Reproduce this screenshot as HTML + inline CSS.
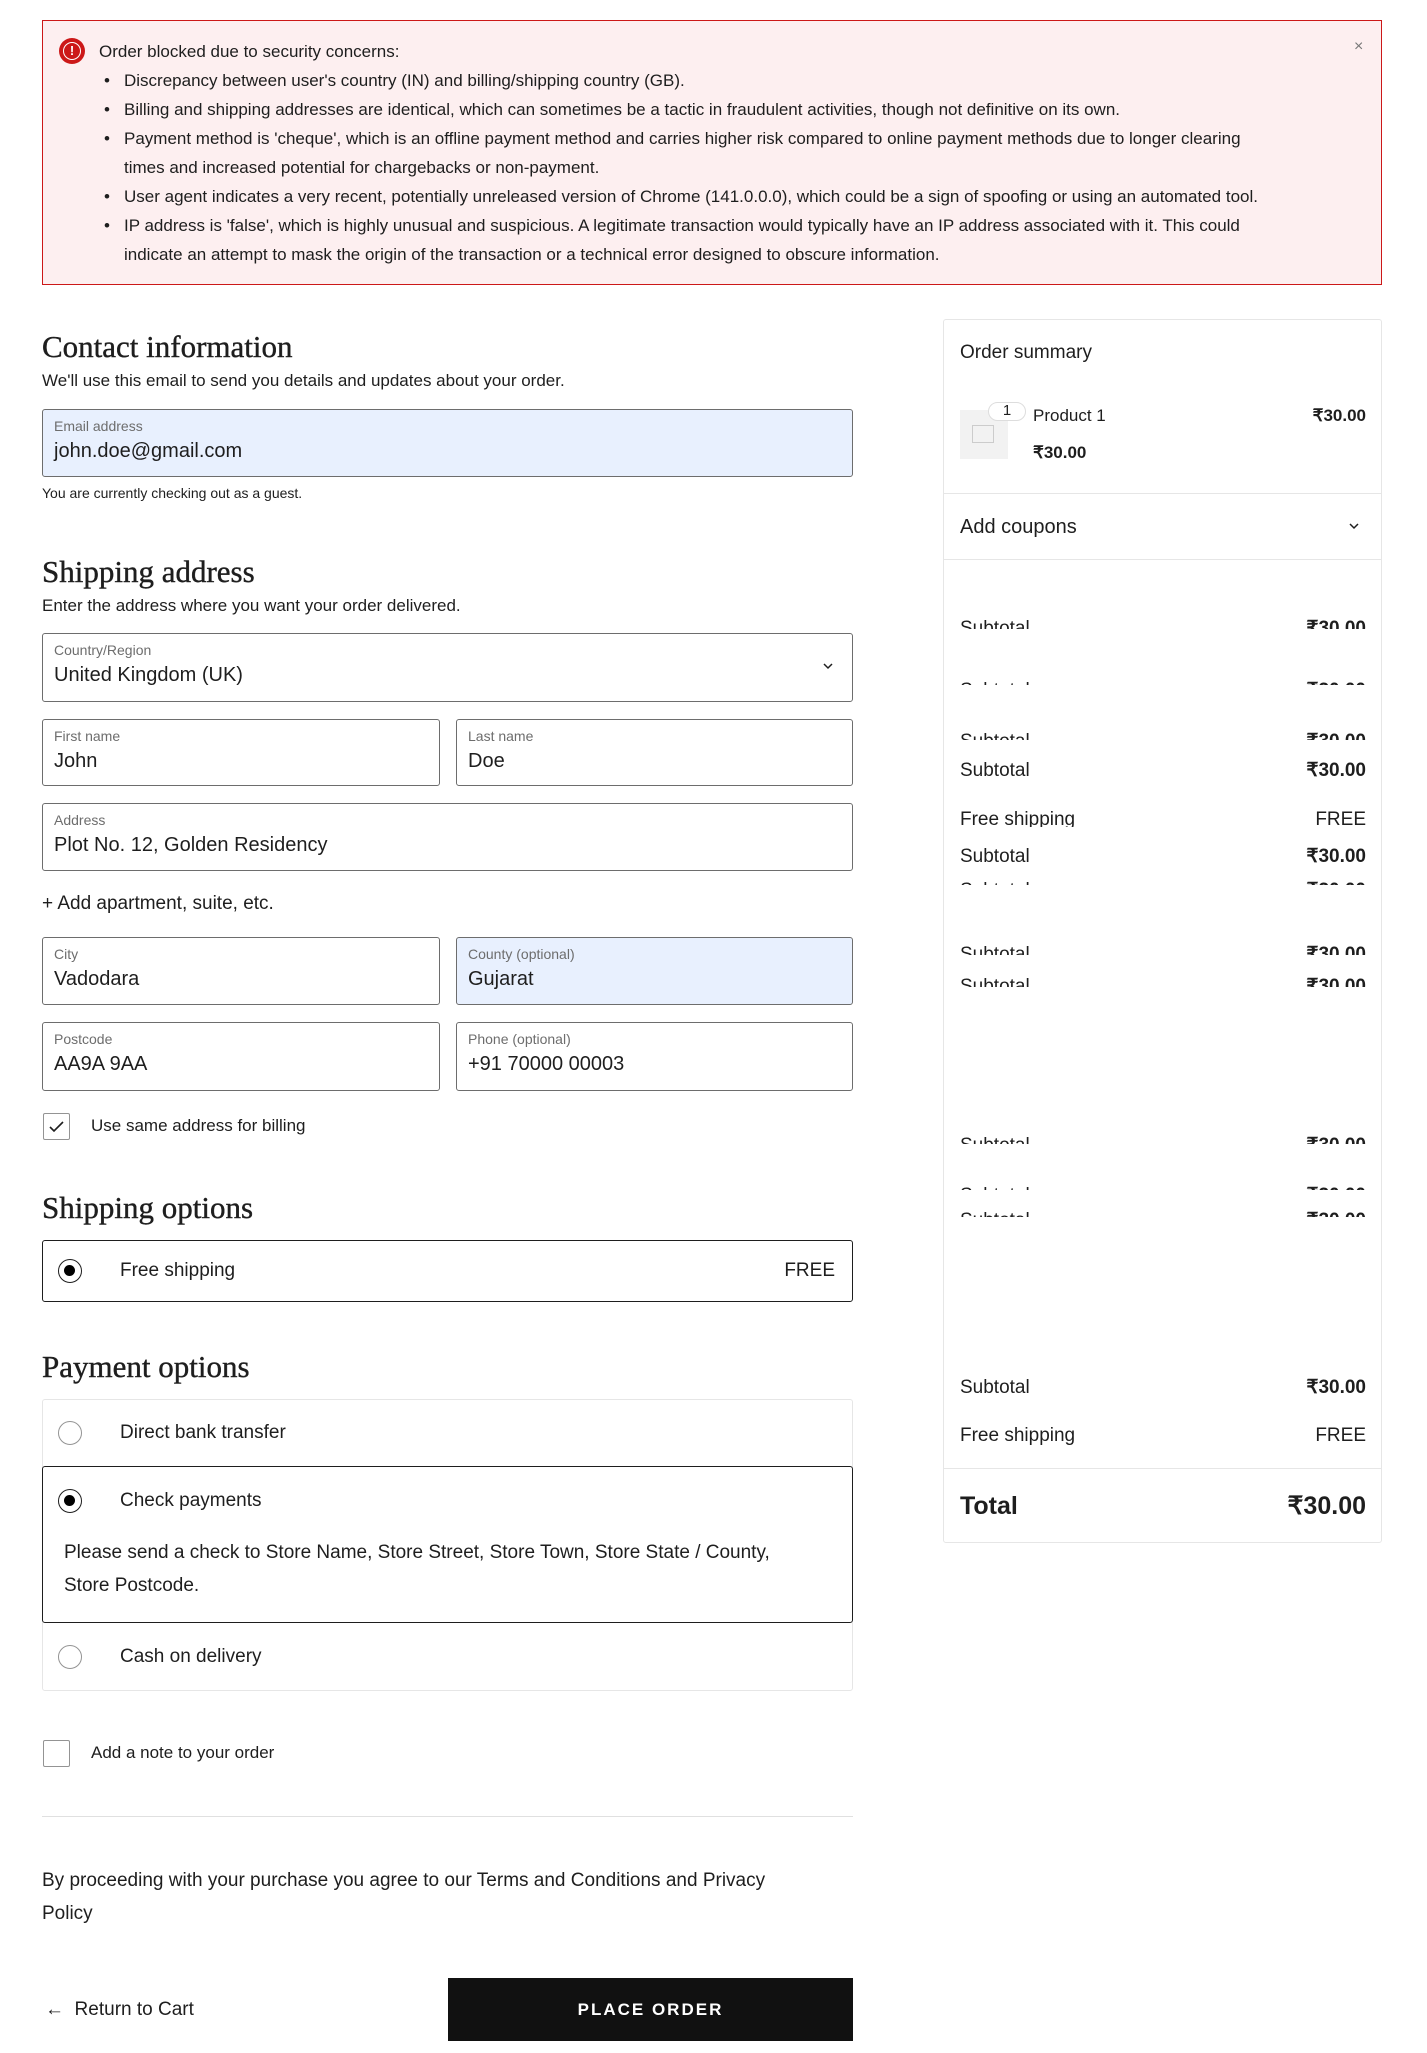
<!DOCTYPE html>
<html><head><meta charset="utf-8"><style>
*{box-sizing:border-box;margin:0;padding:0}
body{width:1427px;height:2053px;position:relative;background:#fff;font-family:"Liberation Sans",sans-serif;color:#1e1e1e;overflow:hidden}
.a{position:absolute;white-space:nowrap}
.al{position:absolute;left:42px;top:20px;width:1340px;height:265px;background:#fdeff0;border:1px solid #cc1818}
.at{font-size:17px;line-height:29px}
.h{font-family:"Liberation Serif",serif;font-size:31px;line-height:36px;color:#1e1e1e;font-weight:normal;-webkit-text-stroke:0.4px #1e1e1e}
.p{font-size:17px;line-height:24px}
.f{position:absolute;border:1px solid #6d6d6d;border-radius:3px;background:#fff}
.f .l{position:absolute;left:11px;top:8px;font-size:14px;color:#6d6d6d;white-space:nowrap}
.f .v{position:absolute;left:11px;top:30px;font-size:20px;white-space:nowrap}
.blue{background:#e8f0fe}
.radio{position:absolute;width:24px;height:24px;border-radius:50%;border:1px solid #949494;background:#fff}
.radio.on{border:1.5px solid #1e1e1e}
.radio.on:after{content:"";position:absolute;left:5px;top:5px;width:11px;height:11px;border-radius:50%;background:#000}
.r{position:absolute;left:960px;width:406px;font-size:19px;line-height:24px;overflow:hidden}
.r span{float:right}
</style></head><body>

<div class="al"></div>
<div class="a" style="left:59px;top:38px;width:26px;height:26px;border-radius:50%;background:#cc1818;"></div>
<div class="a" style="left:63px;top:42px;width:18px;height:18px;border-radius:50%;border:1.5px solid #fff;color:#fff;font-size:13px;line-height:15px;text-align:center;font-weight:bold">!</div>
<div class="a" style="left:1354px;top:38px;font-size:16px;color:#777">×</div>
<div class="a at" style="left:99px;top:37px">Order blocked due to security concerns:</div>
<div class="a at" style="left:104px;top:66px">•</div>
<div class="a at" style="left:124px;top:66px">Discrepancy between user's country (IN) and billing/shipping country (GB).</div>
<div class="a at" style="left:104px;top:95px">•</div>
<div class="a at" style="left:124px;top:95px">Billing and shipping addresses are identical, which can sometimes be a tactic in fraudulent activities, though not definitive on its own.</div>
<div class="a at" style="left:104px;top:124px">•</div>
<div class="a at" style="left:124px;top:124px">Payment method is 'cheque', which is an offline payment method and carries higher risk compared to online payment methods due to longer clearing</div>
<div class="a at" style="left:124px;top:153px">times and increased potential for chargebacks or non-payment.</div>
<div class="a at" style="left:104px;top:182px">•</div>
<div class="a at" style="left:124px;top:182px">User agent indicates a very recent, potentially unreleased version of Chrome (141.0.0.0), which could be a sign of spoofing or using an automated tool.</div>
<div class="a at" style="left:104px;top:211px">•</div>
<div class="a at" style="left:124px;top:211px">IP address is 'false', which is highly unusual and suspicious. A legitimate transaction would typically have an IP address associated with it. This could</div>
<div class="a at" style="left:124px;top:240px">indicate an attempt to mask the origin of the transaction or a technical error designed to obscure information.</div>

<div class="a h" style="left:42px;top:329px">Contact information</div>
<div class="a p" style="left:42px;top:369px">We'll use this email to send you details and updates about your order.</div>
<div class="f blue" style="left:42px;top:409px;width:811px;height:68px"><div class="l">Email address</div><div class="v">john.doe@gmail.com</div></div>
<div class="a" style="left:42px;top:485px;font-size:14px">You are currently checking out as a guest.</div>

<div class="a h" style="left:42px;top:554px">Shipping address</div>
<div class="a p" style="left:42px;top:594px">Enter the address where you want your order delivered.</div>
<div class="f" style="left:42px;top:633px;width:811px;height:69px"><div class="l">Country/Region</div><div class="v">United Kingdom (UK)</div>
<svg style="position:absolute;right:18px;top:28px" width="12" height="8" viewBox="0 0 12 8"><path d="M2 2l4 4 4-4" stroke="#1e1e1e" stroke-width="1.5" fill="none"/></svg></div>
<div class="f" style="left:42px;top:719px;width:398px;height:67px"><div class="l">First name</div><div class="v">John</div></div>
<div class="f" style="left:456px;top:719px;width:397px;height:67px"><div class="l">Last name</div><div class="v">Doe</div></div>
<div class="f" style="left:42px;top:803px;width:811px;height:68px"><div class="l">Address</div><div class="v">Plot No. 12, Golden Residency</div></div>
<div class="a" style="left:42px;top:893px;font-size:19px">+ Add apartment, suite, etc.</div>
<div class="f" style="left:42px;top:937px;width:398px;height:68px"><div class="l">City</div><div class="v">Vadodara</div></div>
<div class="f blue" style="left:456px;top:937px;width:397px;height:68px"><div class="l">County (optional)</div><div class="v">Gujarat</div></div>
<div class="f" style="left:42px;top:1022px;width:398px;height:69px"><div class="l">Postcode</div><div class="v">AA9A 9AA</div></div>
<div class="f" style="left:456px;top:1022px;width:397px;height:69px"><div class="l">Phone (optional)</div><div class="v">+91 70000 00003</div></div>
<div class="a" style="left:43px;top:1113px;width:27px;height:27px;border:1px solid #949494;border-radius:2px"><svg width="25" height="25" viewBox="0 0 25 25"><path d="M6 13l4 4 9-9" stroke="#1e1e1e" stroke-width="1.6" fill="none"/></svg></div>
<div class="a" style="left:91px;top:1116px;font-size:17px;line-height:20px">Use same address for billing</div>

<div class="a h" style="left:42px;top:1190px">Shipping options</div>
<div class="a" style="left:42px;top:1240px;width:811px;height:62px;border:1.5px solid #1e1e1e;border-radius:3px"></div>
<div class="radio on" style="left:58px;top:1259px"></div>
<div class="a" style="left:120px;top:1259px;font-size:19px;line-height:24px">Free shipping</div>
<div class="a" style="right:592px;top:1259px;font-size:19px;line-height:24px">FREE</div>

<div class="a h" style="left:42px;top:1349px">Payment options</div>
<div class="a" style="left:42px;top:1399px;width:811px;height:292px;border:1px solid #e6e6e6;border-radius:3px"></div>
<div class="radio" style="left:58px;top:1421px"></div>
<div class="a" style="left:120px;top:1421px;font-size:19px;line-height:24px">Direct bank transfer</div>
<div class="a" style="left:42px;top:1466px;width:811px;height:157px;border:1.5px solid #1e1e1e;border-radius:3px"></div>
<div class="radio on" style="left:58px;top:1489px"></div>
<div class="a" style="left:120px;top:1489px;font-size:19px;line-height:24px">Check payments</div>
<div class="a" style="left:64px;top:1536px;font-size:19px;line-height:33px">Please send a check to Store Name, Store Street, Store Town, Store State / County,<br>Store Postcode.</div>
<div class="radio" style="left:58px;top:1645px"></div>
<div class="a" style="left:120px;top:1645px;font-size:19px;line-height:24px">Cash on delivery</div>

<div class="a" style="left:43px;top:1740px;width:27px;height:27px;border:1px solid #949494;border-radius:2px"></div>
<div class="a" style="left:91px;top:1743px;font-size:17px;line-height:20px">Add a note to your order</div>
<div class="a" style="left:42px;top:1816px;width:811px;height:1px;background:#e0e0e0"></div>
<div class="a" style="left:42px;top:1864px;font-size:19px;line-height:33px">By proceeding with your purchase you agree to our Terms and Conditions and Privacy<br>Policy</div>
<div class="a" style="left:45px;top:1998px;font-size:19px;line-height:24px">←&nbsp; Return to Cart</div>
<div class="a" style="left:448px;top:1978px;width:405px;height:63px;background:#111;color:#fff;font-size:17px;font-weight:bold;letter-spacing:2px;text-align:center;line-height:63px">PLACE ORDER</div>

<div class="a" style="left:943px;top:319px;width:439px;height:1224px;border:1px solid #e6e6e6;border-radius:3px"></div>
<div class="a" style="left:960px;top:341px;font-size:19px;line-height:24px">Order summary</div>
<div class="a" style="left:960px;top:410px;width:48px;height:49px;background:#f2f2f2"></div>
<div class="a" style="left:972px;top:425px;width:22px;height:18px;border:1px solid #ccc"></div>
<div class="a" style="left:988px;top:402px;width:38px;height:19px;border:1.5px solid #ddd;border-radius:10px;background:#fff;font-size:15px;line-height:16px;text-align:center">1</div>
<div class="a" style="left:1033px;top:404px;font-size:17px;line-height:24px">Product 1</div>
<div class="a" style="right:61px;top:404px;font-size:17px;line-height:24px;font-weight:bold">₹30.00</div>
<div class="a" style="left:1033px;top:441px;font-size:17px;line-height:24px;font-weight:bold">₹30.00</div>
<div class="a" style="left:944px;top:493px;width:437px;height:1px;background:#e6e6e6"></div>
<div class="a" style="left:960px;top:515px;font-size:20px;line-height:24px">Add coupons</div>
<svg class="a" style="left:1348px;top:522px" width="12" height="8" viewBox="0 0 12 8"><path d="M2 2l4 4 4-4" stroke="#1e1e1e" stroke-width="1.5" fill="none"/></svg>
<div class="a" style="left:944px;top:559px;width:437px;height:1px;background:#e6e6e6"></div>

<div class="r" style="top:617px;height:12px">Subtotal<span><b>₹30.00</b></span></div>
<div class="r" style="top:679px;height:6px">Subtotal<span><b>₹30.00</b></span></div>
<div class="r" style="top:730px;height:10px">Subtotal<span><b>₹30.00</b></span></div>
<div class="r" style="top:759px;height:24px">Subtotal<span><b>₹30.00</b></span></div>
<div class="r" style="top:808px;height:19px">Free shipping<span>FREE</span></div>
<div class="r" style="top:845px;height:24px">Subtotal<span><b>₹30.00</b></span></div>
<div class="r" style="top:879px;height:6px">Subtotal<span><b>₹30.00</b></span></div>
<div class="r" style="top:943px;height:12px">Subtotal<span><b>₹30.00</b></span></div>
<div class="r" style="top:975px;height:12px">Subtotal<span><b>₹30.00</b></span></div>
<div class="r" style="top:1134px;height:10px">Subtotal<span><b>₹30.00</b></span></div>
<div class="r" style="top:1184px;height:6px">Subtotal<span><b>₹30.00</b></span></div>
<div class="r" style="top:1209px;height:8px">Subtotal<span><b>₹30.00</b></span></div>
<div class="r" style="top:1376px;height:24px">Subtotal<span><b>₹30.00</b></span></div>
<div class="r" style="top:1424px;height:24px">Free shipping<span>FREE</span></div>
<div class="a" style="left:944px;top:1468px;width:437px;height:1px;background:#e6e6e6"></div>
<div class="r" style="top:1490px;height:32px;font-size:25px;line-height:32px;font-weight:bold">Total<span>₹30.00</span></div>
</body></html>
